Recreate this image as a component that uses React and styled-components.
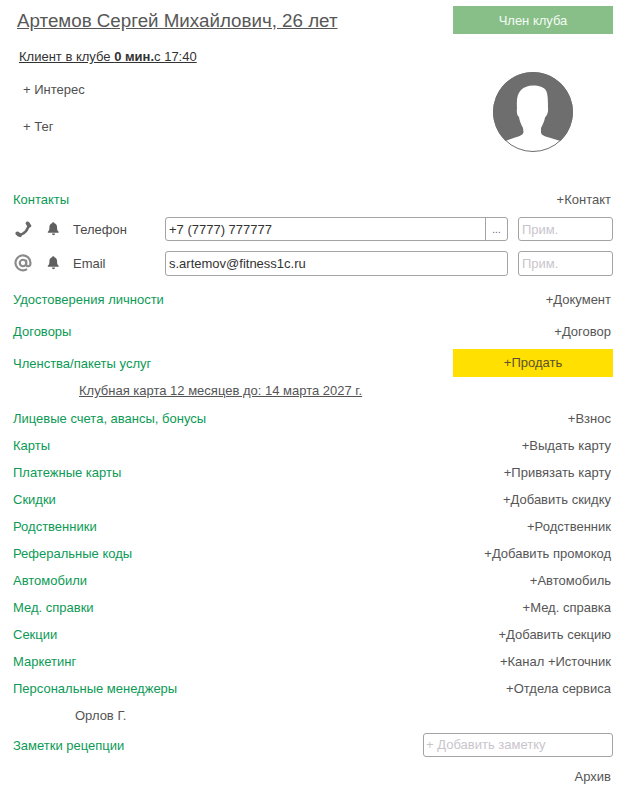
import React from 'react';
import styled, { createGlobalStyle } from 'styled-components';

const Global = createGlobalStyle`
html, body { margin: 0; padding: 0; background: #fff; }
body { font-family: "Liberation Sans", Arial, sans-serif; font-size: 13px; color: #4b4b4b; }
`

const Page = styled.div`
width: 623px;
height: 792px;
overflow: hidden;
padding: 6px 10px 0 13px;
box-sizing: border-box;
`

const Header = styled.div`
display: flex;
justify-content: space-between;
height: 180px;
`

const HeaderLeft = styled.div`
display: flex;
flex-direction: column;
align-items: flex-start;
`

const Title = styled.a`
font-size: 18.75px;
line-height: 21px;
margin: 4px 0 0 4px;
color: #575757;
text-decoration: underline;
`

const Presence = styled.a`
margin: 19px 0 0 6px;
line-height: 14px;
color: #333;
text-decoration: underline;
b { font-weight: bold; }
`

const Tag = styled.div`
margin: ${props => props.$top}px 0 0 10px;
line-height: 14px;
color: #4f4f4f;
`

const HeaderRight = styled.div`
width: 160px;
display: flex;
flex-direction: column;
align-items: center;
`

const Status = styled.div`
width: 160px;
height: 28px;
background: #88bf88;
color: #f4fbf4;
display: flex;
align-items: center;
justify-content: center;
`

const Avatar = styled.svg`
width: 80px;
height: 80px;
margin-top: 38px;
display: block;
`

const Row = styled.div`
display: flex;
justify-content: space-between;
align-items: center;
height: ${props => props.$h || 27}px;
line-height: 14px;
padding-right: 2px;
`

const Section = styled.span`
color: #0c9a55;
`

const Action = styled.a`
color: #565656;
`

const ContactRow = styled.div`
display: flex;
align-items: center;
height: ${props => props.$h}px;
`

const TypeIcon = styled.div`
width: 20px;
margin-right: 14px;
display: flex;
justify-content: center;
`

const Bell = styled.svg`
width: 13px;
height: 14px;
margin-right: 13px;
display: block;
`

const ContactLabel = styled.span`
width: 92px;
color: #4a4a4a;
`

const Field = styled.div`
height: ${props => props.$h || 24}px;
width: ${props => props.$w}px;
margin-left: ${props => props.$ml || 0}px;
box-sizing: border-box;
border: 1px solid #a3a3a3;
border-radius: 3px;
display: flex;
align-items: center;
background: #fff;
color: ${props => props.$muted ? '#c9c5cc' : '#333'};
padding-left: ${props => props.$pl || 3}px;
`

const FieldText = styled.span`
flex: 1;
`

const Dots = styled.span`
width: 21px;
height: 22px;
border-left: 1px solid #a3a3a3;
color: #666;
display: flex;
justify-content: center;
align-items: center;
font-size: 10px;
`

const Sell = styled.div`
width: 160px;
height: 28px;
background: #ffe000;
color: #5a5030;
display: flex;
align-items: center;
justify-content: center;
`

const SellRow = styled(Row)`
padding-right: 0;
${Section} { padding-top: 1px; }
`

const SubLink = styled.a`
margin-left: ${props => props.$ml}px;
color: #555;
text-decoration: ${props => props.$line ? 'underline' : 'none'};
line-height: 14px;
`

const SubRow = styled.div`
display: flex;
align-items: center;
height: ${props => props.$h}px;
margin-bottom: ${props => props.$mb || 0}px;
`

const PhoneIcon = () => (
  <svg width="17" height="17" viewBox="0 0 17 17" fill="none" stroke="#686868" strokeLinecap="round">
    <path strokeWidth="2.400" d="M13.500 3C14 8.500 8.500 14 3 14" />
    <path strokeWidth="3.800" d="M12.600 2.400L14.300 4.800M2.400 12.400L5 14.200" />
  </svg>
)

const AtIcon = () => (
  <svg width="18" height="18" viewBox="0 0 20 20" fill="none" stroke="#8a8a8a" strokeWidth="2.400">
    <path d="M14.500 16.800A8.300 8.300 0 1 1 18.300 10c0 2.200-1 3.600-2.500 3.600S13.500 12.500 13.500 11V6.500" />
    <circle cx="10" cy="10" r="3.600" />
  </svg>
)

const BellIcon = () => (
  <Bell viewBox="0 0 12 13">
    <path fill="#5f5f5f" d="M6 .3c.5 0 .8.300.8.900 1.700.5 2.500 1.800 2.500 3.600 0 2.500.4 3.300 1.500 4.300v.9H.7v-.9c1.100-1 1.500-1.800 1.500-4.300 0-1.800.8-3.100 2.500-3.600 0-.6.300-.9.800-.9zM4.600 10.700h2.800c0 .9-.6 1.500-1.400 1.500s-1.400-.6-1.400-1.500z"/>
  </Bell>
)

const sections = [
  ['Лицевые счета, авансы, бонусы', '+Взнос'],
  ['Карты', '+Выдать карту'],
  ['Платежные карты', '+Привязать карту'],
  ['Скидки', '+Добавить скидку'],
  ['Родственники', '+Родственник'],
  ['Реферальные коды', '+Добавить промокод'],
  ['Автомобили', '+Автомобиль'],
  ['Мед. справки', '+Мед. справка'],
  ['Секции', '+Добавить секцию'],
  ['Маркетинг', '+Канал +Источник'],
  ['Персональные менеджеры', '+Отдела сервиса'],
]

export default function App() {
  return (
    <Page>
      <Global />
      <Header>
        <HeaderLeft>
          <Title>Артемов Сергей Михайлович, 26 лет</Title>
          <Presence>Клиент в клубе <b>0 мин.</b>с 17:40</Presence>
          <Tag $top={19}>+ Интерес</Tag>
          <Tag $top={23}>+ Тег</Tag>
        </HeaderLeft>
        <HeaderRight>
          <Status>Член клуба</Status>
          <Avatar viewBox="0 0 80 80">
            <circle cx="40" cy="40" r="39.500" fill="#fff" stroke="#6e6e6e" strokeWidth="1" />
            <path fill="#6e6e6e" d="M40 0A40 40 0 0 0 12.500 69L22 65.500C27 64 30 63 30.500 60L30 56C28 52 26.500 49 26 45C24 44 23.500 40 24 36C23.500 28 24 22 28 18C31 15 35 13.500 40 13.500C46 13.500 51 15 53 18.500C55 22 55 30 55 36C55.500 40 54 44 52 45.500C51.500 49 50 52 48 56L48 60C48 63 51 64 56 65.500L67.500 69A40 40 0 0 0 40 0Z" />
          </Avatar>
        </HeaderRight>
      </Header>

      <Row $h={28}>
        <Section>Контакты</Section>
        <Action>+Контакт</Action>
      </Row>
      <ContactRow $h={30}>
        <TypeIcon><PhoneIcon /></TypeIcon>
        <BellIcon />
        <ContactLabel>Телефон</ContactLabel>
        <Field $w={343}>
          <FieldText>+7 (7777) 777777</FieldText>
          <Dots>...</Dots>
        </Field>
        <Field $w={95} $ml={10} $muted>Прим.</Field>
      </ContactRow>
      <ContactRow $h={38}>
        <TypeIcon><AtIcon /></TypeIcon>
        <BellIcon />
        <ContactLabel>Email</ContactLabel>
        <Field $w={343} $h={25}><FieldText>s.artemov@fitness1c.ru</FieldText></Field>
        <Field $w={95} $ml={10} $h={25} $muted>Прим.</Field>
      </ContactRow>
      <Row $h={35}>
        <Section>Удостоверения личности</Section>
        <Action>+Документ</Action>
      </Row>
      <Row $h={29}>
        <Section>Договоры</Section>
        <Action>+Договор</Action>
      </Row>
      <SellRow $h={34}>
        <Section>Членства/пакеты услуг</Section>
        <Sell>+Продать</Sell>
      </SellRow>
      <SubRow $h={22} $mb={3}>
        <SubLink $ml={66} $line>Клубная карта 12 месяцев до: 14 марта 2027 г.</SubLink>
      </SubRow>
      {sections.map(([name, action]) => (
        <Row key={name}>
          <Section>{name}</Section>
          <Action>{action}</Action>
        </Row>
      ))}
      <SubRow $h={27}>
        <SubLink $ml={62}>Орлов Г.</SubLink>
      </SubRow>
      <SellRow $h={32}>
        <Section>Заметки рецепции</Section>
        <Field $w={190} $muted $pl={2}>+ Добавить заметку</Field>
      </SellRow>
      <Row $h={32}>
        <span />
        <Action>Архив</Action>
      </Row>
    </Page>
  )
}
